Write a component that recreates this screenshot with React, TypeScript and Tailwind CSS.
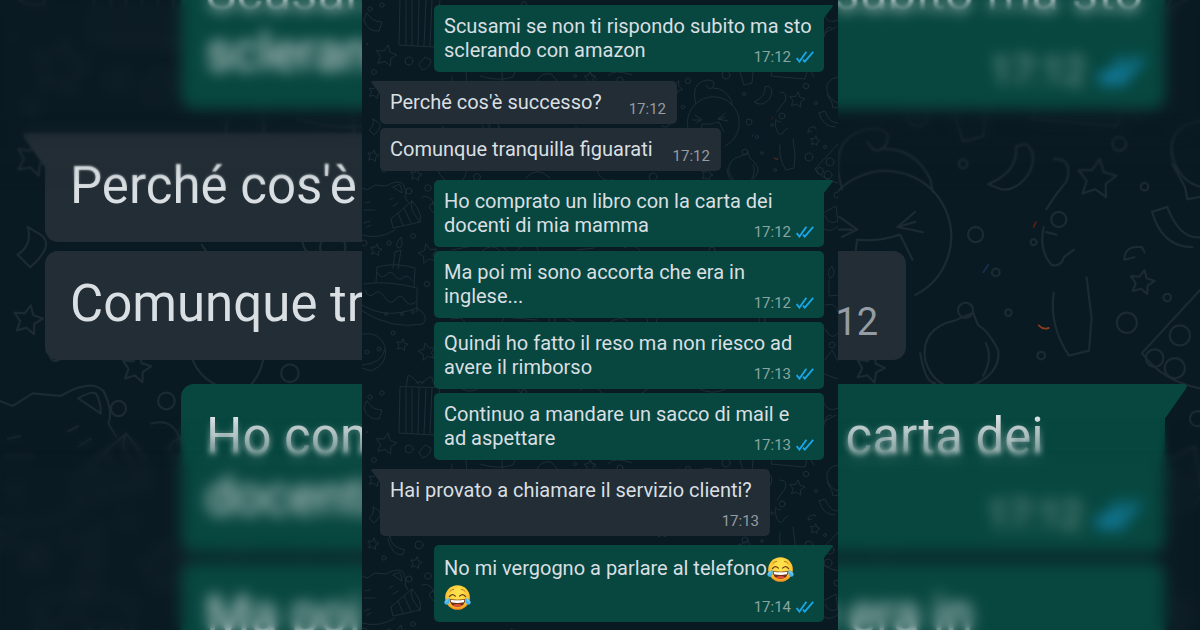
import React from "react";
import clsx from "clsx";

type Scale = "normal" | "large";

type Message = {
  lines: string[];
  time: string;
  out?: boolean;
  first?: boolean;
  inlineTime?: boolean;
  emoji?: boolean;
};

const messages: Message[] = [
  { lines: ["Scusami se non ti rispondo subito ma sto", "sclerando con amazon"], time: "17:12", out: true, first: true },
  { lines: ["Perché cos'è successo?"], time: "17:12", first: true, inlineTime: true },
  { lines: ["Comunque tranquilla figuarati"], time: "17:12", inlineTime: true },
  { lines: ["Ho comprato un libro con la carta dei", "docenti di mia mamma"], time: "17:12", out: true, first: true },
  { lines: ["Ma poi mi sono accorta che era in", "inglese..."], time: "17:12", out: true },
  { lines: ["Quindi ho fatto il reso ma non riesco ad", "avere il rimborso"], time: "17:13", out: true },
  { lines: ["Continuo a mandare un sacco di mail e", "ad aspettare"], time: "17:13", out: true },
  { lines: ["Hai provato a chiamare il servizio clienti?"], time: "17:13", first: true },
  { lines: ["No mi vergogno a parlare al telefono😂", "😂"], time: "17:14", out: true, first: true, emoji: true },
];

const styles = {
  normal: {
    list: "pt-[5px]",
    group: "mt-[9px]",
    next: "mt-1",
    out: "ml-[72px] mr-[14px]",
    in: "ml-[18px]",
    inWide: "w-[390px]",
    inShort: "min-w-[297px]",
    bubble: "rounded-[5px] pt-[9px] pb-[5px] px-[10px]",
    text: "text-[20px] leading-[24px]",
    emojiText: "text-[20px] leading-[28px] pb-[7px]",
    emojiLine: "h-[28px]",
    plainText: "pb-[5px]",
    twoLines: "min-h-[53px]",
    time: "text-[15px] leading-[20px] gap-[5px]",
    timeInset: "pr-[1px]",
    inlineGap: "gap-[20px]",
    ticks: "w-[18px] h-[12px]",
    emoji: "size-[27px]",
    tail: "w-[10px] h-[13px]",
    tailOut: "-right-[9px]",
    tailIn: "-left-[9px]",
  },
  large: {
    list: "",
    group: "mt-[24px]",
    next: "mt-[9px]",
    out: "ml-[181px] mr-[35px]",
    in: "ml-[45px]",
    inWide: "w-[984px]",
    inShort: "min-w-[748px]",
    bubble: "rounded-[13px] pt-[23px] pb-[13px] px-[25px]",
    text: "text-[51px] leading-[60px]",
    emojiText: "text-[51px] leading-[70px] pb-[18px]",
    emojiLine: "h-[70px]",
    plainText: "pb-[13px]",
    twoLines: "min-h-[133px]",
    time: "text-[38px] leading-[50px] gap-[13px]",
    timeInset: "pr-[3px]",
    inlineGap: "gap-[44px]",
    ticks: "w-[45px] h-[30px]",
    emoji: "size-[68px]",
    tail: "w-[24px] h-[34px]",
    tailOut: "-right-[22px]",
    tailIn: "-left-[22px]",
  },
};

function star(cx: number, cy: number, r: number, turn = 0) {
  const points: string[] = [];
  for (let i = 0; i < 10; i++) {
    const a = -Math.PI / 2 + turn + (i * Math.PI) / 5;
    const d = i % 2 ? r * 0.5 : r;
    points.push(`${(cx + d * Math.cos(a)).toFixed(1)} ${(cy + d * Math.sin(a)).toFixed(1)}`);
  }
  return `M${points.join("L")}Z`;
}

const stars = [
  star(24, 56, 11, 0.2), star(13, 92, 7, 0.3), star(11, 156, 6, 0.2), star(54, 175, 6, 0.2),
  star(14, 250, 6, 0.2), star(66, 254, 10, -0.2), star(40, 345, 6, 0.2), star(65, 352, 9, -0.2),
  star(435, 100, 8, 0.15), star(453, 141, 5, 0.2), star(345, 175, 6, 0.3), star(313, 88, 8, 0.5),
  star(228, 78, 6), star(150, 250, 9), star(290, 318, 9), star(300, 144, 6),
];

const circles: [number, number, number][] = [
  [8, 9, 2.2], [20, 5, 2.2], [47, 61, 4], [12, 72, 2.4], [5, 44, 0.5], [57, 157, 4], [22, 170, 2.2],
  [47, 191, 3], [66, 188, 3.3], [51, 236, 2.4], [27, 243, 2.2], [2, 243, 3], [65, 284, 2.6],
  [24, 314, 1.5], [40, 314, 1.5], [51, 312, 1.5], [31, 333, 2], [5, 352, 2], [17, 349, 2],
  [162, 4, 2.5], [326, 81, 2.7], [364, 75, 4], [444, 86, 2.7], [382, 94, 1.7], [321, 107, 1.7],
  [387, 122, 3], [420, 116, 3], [383, 152, 3], [447, 157, 4], [395, 137, 1.5], [400, 153, 1.3],
  [410, 125, 1.2], [454, 103, 1.5], [463, 147, 1.5], [413, 170, 1.5], [291, 177, 4], [115, 177, 3.5],
  [258, 80, 3], [132, 127, 5], [213, 76, 1.5], [468, 162, 4], [466, 175, 4], [458, 171, 3.5],
  [350, 250, 3], [190, 320, 3], [400, 320, 3], [475, 195, 3], [470, 345, 3],
];

const sketches = [
  "M5 13Q10 22 20 22L17 31Q5 32 2 20Z",
  "M38 -1L37 45L72 47L78 0ZM44 0L44 45M50 0L50 46M57 0L56 46M64 0L62 46M70 0L68 46",
  "M57 -4Q47 -15 46 -12L44 -1M59 -4Q70 -14 70 -10L73 -1M54 -5Q58 -8 62 -5",
  "M57 64L63 57L69 60Q69 67 61 70Z",
  "M11 119L16 122Q22 126 12 135L7 130Q13 126 11 119Z",
  "M28 148Q28 159 43 162L40 167Q30 167 26 152Z",
  "M0 188L5 190L13 185L24 186Q36 179 41 184Q45 192 43 197L46 202M31 187Q36 184 38 185Q40 188 40 193L31 187M0 235Q17 240 33 230",
  "M27 200L31 198M31 206L36 203M3 203L8 202M2 210L13 210M2 223L8 221M5 227L9 225",
  "M29 219L50 201M29 219L31 228L58 222M50 201Q61 213 58 222M50 201Q46 208 58 222M36 213L41 225M42 208L49 223",
  "M33 252L39 250L36 269M33 252L31 268M37 248Q31 246 39 237Q42 248 37 248",
  "M14 282L15 267Q33 262 53 268L52 287M15 272Q19 280 24 275Q29 269 33 276Q38 282 42 277Q47 274 50 281",
  "M2 284Q25 280 55 288L55 312M3 290Q7 300 13 293Q18 289 23 298Q29 306 34 299Q39 292 44 302Q49 307 55 301M0 305Q24 320 55 308Q68 316 61 324Q30 330 0 311",
  "M0 334Q17 331 23 346Q27 364 9 371L0 368M0 365Q20 364 23 349",
  "M73 202Q62 206 72 213M60 197Q69 194 72 205",
  "M90 76L89 91M104 72L105 87M118 76Q137 82 151 77L153 72M174 84Q177 72 189 74L198 84",
  "M140 72L141 92M246 76Q251 68 270 75M235 80L228 72",
  "M80 126L84 132M120 125Q121 133 136 130M214 127L215 135M310 121Q305 130 300 126",
  "M75 168Q80 185 98 183Q104 178 105 168M164 178Q175 165 188 178M235 170Q238 183 252 180",
  "M90 250L110 246M118 253Q130 240 140 253M174 246L178 254L194 253M215 250L232 248M262 248Q272 241 280 253",
  "M89 319L99 318L104 323M140 322L142 317L175 320M205 319L215 323M247 323Q258 315 266 321",
  "M100 389Q112 395 120 385M155 388L160 394M218 390Q232 380 240 393M280 393L290 386M336 388Q350 396 364 389",
  "M363 146A26 26 0 1 0 327 132M334 104Q328 83 345 80Q355 80 351 87Q347 91 344 85M351 88Q363 88 369 100L370 105",
  "M333 115L340 120L334 123M330 120L338 120M363 113L356 119L366 121M356 119L363 117M339 132L340 124Q348 125 357 122L362 132",
  "M378 72L382 85L390 83L391 72M410 72L409 76L443 79L445 72M449 72L452 77",
  "M403 87L407 86Q412 90 408 98Q403 105 397 104L392 102Q404 97 403 87Z",
  "M418 92Q426 92 423 101L419 106L415 112",
  "M414 119Q412 128 417 134Q421 135 422 131L426 128M415 121L419 122",
  "M431 139L433 155L432 168L424 170Q416 158 418 145",
  "M446 132Q446 126 453 127L454 129M446 132L450 131",
  "M457 113L463 111Q468 124 476 123M457 113Q461 127 473 127",
  "M379 156Q365 159 367 172Q371 184 383 183Q397 178 396 168Q392 160 388 158L386 153ZM365 169Q367 181 371 181M391 165Q394 171 390 178",
  "M453 169L476 144M453 169Q461 180 476 183",
  "M476 77Q463 79 465 91Q468 101 476 103M465 94L470 103L471 108L476 107M462 37Q464 24 470 28M463 33L474 27M462 15Q466 25 476 20",
  "M463 212L474 206L476 222M463 216Q467 226 476 221M462 229Q470 233 476 226M467 280L467 296L476 295M468 278Q464 272 470 266Q475 276 468 278M463 305Q474 302 476 312M463 329Q470 342 476 333M463 360L470 350L476 361M462 374L476 379",
];

function Doodles({ className }: { className: string }) {
  const tile = (
    <g>
      {stars.map((d) => <path key={d} d={d} />)}
      {sketches.map((d) => <path key={d} d={d} />)}
      {circles.map(([x, y, r], i) => <circle key={i} cx={x} cy={y} r={r} />)}
    </g>
  );
  return (
    <svg viewBox="0 0 476 630" preserveAspectRatio="xMidYMin slice" aria-hidden="true" className={className}>
      <g fill="none" strokeWidth="0.9" strokeLinejoin="round" strokeLinecap="round">
        {tile}
        <g transform="translate(0 388)">{tile}</g>
      </g>
      <g fill="none" strokeLinecap="round" strokeWidth="0.7">
        <path d="M410 119L411 117" stroke="#5a1c14" />
        <path d="M412 158Q414 160 416 159" stroke="#8a3d20" />
        <path d="M390 137L392 134" stroke="#16304f" />
      </g>
    </svg>
  );
}

function Ticks({ className }: { className: string }) {
  return (
    <svg viewBox="0 0 18 12" fill="none" stroke="#1aa7ea" strokeWidth="1.8" className={className} role="img" aria-label="Letto">
      <path d="M0.6 7L3.4 10.6L10.4 0.8" />
      <path d="M7 8.6L8.8 10.6L17.2 0.8" />
    </svg>
  );
}

function JoyFace({ className }: { className: string }) {
  return (
    <svg viewBox="0 0 28 28" className={clsx("inline-block align-middle", className)} role="img" aria-label="😂">
      <defs>
        <radialGradient id="joy-skin" cx="0.5" cy="0.35" r="0.65">
          <stop offset="0.3" stopColor="#ffe04a" />
          <stop offset="0.8" stopColor="#fcb92c" />
          <stop offset="1" stopColor="#ec8b1c" />
        </radialGradient>
      </defs>
      <circle cx="14" cy="14" r="12.8" fill="url(#joy-skin)" />
      <path d="M6 7.8Q7.5 5.6 10 5.6M22 7.8Q20.5 5.6 18 5.6" fill="none" stroke="#b8741a" strokeWidth="1" strokeLinecap="round" />
      <path d="M5.6 13Q8.4 9 11.8 12.6M22.4 13Q19.6 9 16.2 12.6" fill="none" stroke="#6b3b12" strokeWidth="1.3" strokeLinecap="round" />
      <path d="M5.8 15.6Q14 17 22.2 15.6Q21.8 23.6 14 23.8Q6.2 23.6 5.8 15.6Z" fill="#6f2f14" />
      <path d="M6.8 16.3Q14 17.6 21.2 16.3L20.6 19Q14 20.2 7.4 19Z" fill="#fff" />
      <path d="M9.3 22Q14 19.4 18.7 22Q16.8 23.6 14 23.6Q11.2 23.6 9.3 22Z" fill="#e2513c" />
      <path d="M5.8 14.4Q6.4 20.4 3.4 21.4Q0.4 21.6 0.2 18.8Q0.8 15.8 5.8 14.4ZM22.2 14.4Q21.6 20.4 24.6 21.4Q27.6 21.6 27.8 18.8Q27.2 15.8 22.2 14.4Z" fill="#45b4ea" />
      <path d="M1.6 18.6Q2.4 17 4.2 16.2M26.4 18.6Q25.6 17 23.8 16.2" fill="none" stroke="#a9e2fb" strokeWidth="0.8" strokeLinecap="round" />
    </svg>
  );
}

function Line({ text, scale, emoji }: { text: string; scale: Scale; emoji?: boolean }) {
  const parts = text.split("😂");
  return (
    <span className={clsx("block whitespace-nowrap", emoji && styles[scale].emojiLine)}>
      {parts.map((part, i) => (
        <React.Fragment key={i}>
          {i > 0 && <JoyFace className={styles[scale].emoji} />}
          {part}
        </React.Fragment>
      ))}
    </span>
  );
}

function Bubble({ message, scale, top }: { message: Message; scale: Scale; top: boolean }) {
  const s = styles[scale];
  const { out, first, inlineTime, emoji } = message;
  return (
    <li
      className={clsx(
        "relative",
        s.bubble,
        out ? clsx("bg-[#07473f]", s.out) : clsx("bg-[#222d35]", s.in),
        inlineTime ? clsx("flex w-fit items-end justify-between", s.inlineGap, s.inShort) : "grid",
        !out && !inlineTime && s.inWide,
        first && (out ? "rounded-tr-none" : "rounded-tl-none"),
        !top && (first ? s.group : s.next),
      )}
    >
      {first && (
        <svg
          viewBox="0 0 10 13"
          preserveAspectRatio="none"
          aria-hidden="true"
          className={clsx("absolute top-0", s.tail, out ? clsx("text-[#07473f]", s.tailOut) : clsx("text-[#222d35]", s.tailIn))}
        >
          <path d={out ? "M0 0H9.2Q10.4 0.6 9.4 2L1 13H0Z" : "M10 0H0.8Q-0.4 0.6 0.6 2L9 13H10Z"} fill="currentColor" />
        </svg>
      )}
      <p
        className={clsx(
          "text-[#d9dfe2]",
          !inlineTime && "col-start-1 row-start-1",
          emoji ? s.emojiText : clsx(s.text, s.plainText),
          !inlineTime && !out && s.twoLines,
        )}
      >
        {message.lines.map((line) => <Line key={line} text={line} scale={scale} emoji={emoji} />)}
      </p>
      <div
        className={clsx(
          "flex items-center",
          s.time,
          out ? "text-[#8aa5a1]" : clsx("text-[#959ca3]", s.timeInset),
          !inlineTime && "col-start-1 row-start-1 place-self-end",
        )}
      >
        <time>{message.time}</time>
        {out && <Ticks className={s.ticks} />}
      </div>
    </li>
  );
}

function Conversation({ scale }: { scale: Scale }) {
  return (
    <ul className={clsx("relative", styles[scale].list)}>
      {messages.map((message, i) => (
        <Bubble key={i} message={message} scale={scale} top={i === 0} />
      ))}
    </ul>
  );
}

export default function App() {
  return (
    <div className="relative min-h-screen overflow-hidden bg-[#0a1a22] font-['Roboto',sans-serif]">
      <div aria-hidden="true" className="absolute inset-0 overflow-hidden">
        <Doodles className="absolute inset-x-0 -top-[73px] w-full stroke-[#1c2a32]" />
        <div className="absolute inset-x-0 -top-[60px]">
          <Conversation scale="large" />
        </div>
        <div className="absolute inset-x-0 top-0 h-[190px] backdrop-blur-[1px] [mask-image:linear-gradient(black_85%,transparent)]" />
        <div className="absolute inset-x-0 top-0 h-[150px] backdrop-blur-[7px] [mask-image:linear-gradient(black_75%,transparent)]" />
        <div className="absolute inset-x-0 top-[418px] bottom-0 backdrop-blur-[3px] [mask-image:linear-gradient(transparent,black_36px)]" />
        <div className="absolute inset-x-0 top-[450px] bottom-0 backdrop-blur-[7px] [mask-image:linear-gradient(transparent,black_20px)]" />
      </div>
      <main className="relative mx-auto min-h-screen w-full max-w-[476px] overflow-hidden bg-[#0a1a22]">
        <Doodles className="absolute inset-x-0 top-0 w-full stroke-[#20303a]" />
        <Conversation scale="normal" />
      </main>
    </div>
  );
}
